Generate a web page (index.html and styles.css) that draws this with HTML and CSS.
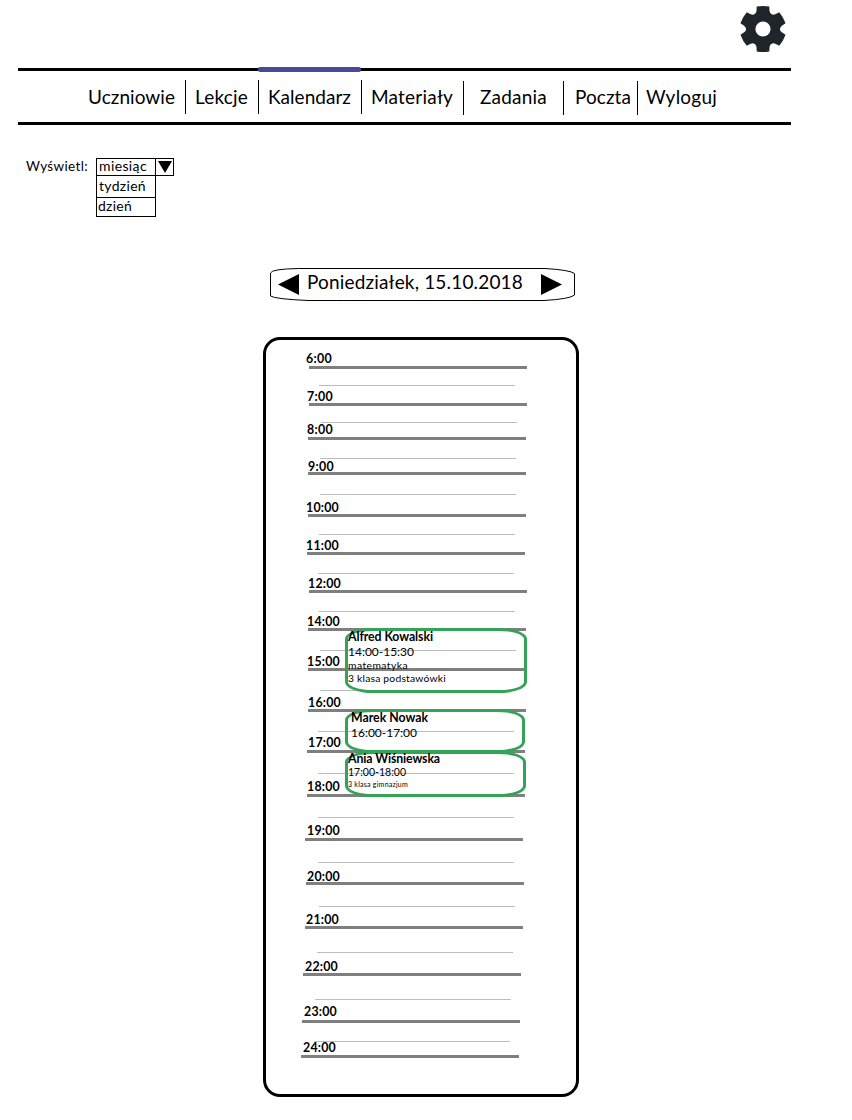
FILE: index.html
```html
<!DOCTYPE html>
<html lang="pl">
<head>
<meta charset="utf-8">
<title>Kalendarz</title>
<link rel="stylesheet" href="styles.css">
</head>
<body>
<header class="top">
  <svg class="gear" viewBox="-23 -23 46 46" width="46" height="46">
    <defs><path id="tooth" d="M-6.3-22.4Q0-23.600 6.3-22.4L6.5-18Q7-15.500 9-14L0 0L-9-14Q-7-15.500-6.5-18Z"/></defs>
    <g fill="#20252b">
      <use href="#tooth"/><use href="#tooth" transform="rotate(60)"/><use href="#tooth" transform="rotate(120)"/>
      <use href="#tooth" transform="rotate(180)"/><use href="#tooth" transform="rotate(240)"/><use href="#tooth" transform="rotate(300)"/>
      <circle r="17"/>
    </g>
    <circle r="7.6" fill="#fff"/>
  </svg>
</header>
<nav class="nav">
  <a class="tab tab-first"><span data-width="87">Uczniowie</span></a>
  <a class="tab tab-lessons"><span data-width="53">Lekcje</span></a>
  <a class="tab tab-active"><span data-width="83">Kalendarz</span></a>
  <a class="tab tab-materials"><span data-width="82">Materiały</span></a>
  <a class="tab tab-tasks"><span data-width="67">Zadania</span></a>
  <a class="tab tab-mail"><span data-width="56">Poczta</span></a>
  <a class="tab tab-logout"><span data-width="71">Wyloguj</span></a>
</nav>
<section class="view">
  <span class="view-label"><span data-width="62">Wyświetl:</span></span>
  <div class="options">
    <div class="option option-month"><span data-width="48">miesiąc</span></div>
    <div class="option option-week"><span data-width="47">tydzień</span></div>
    <div class="option option-day"><span data-width="34">dzień</span></div>
  </div>
  <div class="drop"><svg width="14" height="12" viewBox="0 0 14 12"><path d="M0 0H14L7 12Z"/></svg></div>
</section>
<section class="date">
  <svg class="date-frame" width="306" height="34" viewBox="0 0 306 34"><path d="M.5 28V5Q1.500 1 28.500 .5H275Q300 2 304.500 5.500V27Q300 31 274 32.500H38Q5 31 .5 28Z" fill="none" stroke="#000"/></svg>
  <svg width="21" height="21" viewBox="0 0 21 21"><path d="M0 10.500L21 0V21Z"/></svg>
  <span class="date-text"><span data-width="216">Poniedziałek, 15.10.2018</span></span>
  <svg width="21" height="21" viewBox="0 0 21 21"><path d="M21 10.500L0 0V21Z"/></svg>
</section>
<main class="day">
  <div class="hours" id="hours"></div>
  <article class="event event-alfred">
    <h3><span data-width="85">Alfred Kowalski</span></h3>
    <p class="time-lg"><span data-width="66">14:00-15:30</span></p>
    <p class="note"><span data-width="60">matematyka</span></p>
    <p class="note"><span data-width="98">3 klasa podstawówki</span></p>
  </article>
  <article class="event event-marek">
    <h3><span data-width="77">Marek Nowak</span></h3>
    <p class="time-lg"><span data-width="66">16:00-17:00</span></p>
  </article>
  <article class="event event-ania">
    <h3><span data-width="92">Ania Wiśniewska</span></h3>
    <p class="time-sm"><span data-width="58">17:00-18:00</span></p>
    <p class="tiny"><span data-width="60">3 klasa gimnazjum</span></p>
  </article>
</main>
<script src="calendar.js"></script>
</body>
</html>
```
FILE: styles.css
```css
* { box-sizing: border-box; }
body { margin: 0; width: 852px; height: 1120px; background: #fff; color: #000; font-family: Lato, "Open Sans", sans-serif; overflow: hidden; }
svg { display: block; flex: none; }
h3, p { margin: 0; }
[data-width] { white-space: nowrap; }
.top { height: 68px; padding: 6px 0 0 740px; }
.nav { display: flex; width: 773px; height: 57px; margin-left: 18px; border-top: 3px solid #000; border-bottom: 3px solid #000; font-size: 19px; }
.tab { display: block; height: 34px; margin-top: 10px; line-height: 31px; border-right: 1px solid #000; }
.tab-first { width: 168px; padding-left: 70px; margin-top: 9px; line-height: 33px; }
.tab-lessons { width: 73px; padding-left: 9px; margin-top: 9px; line-height: 33px; }
.tab-active { position: relative; width: 103px; padding-left: 9px; margin-top: 9px; line-height: 33px; }
.tab-active::before { content: ""; position: absolute; left: -1px; top: -13px; width: 103px; height: 5px; border-radius: 2px; background: #474b97; }
.tab-materials { width: 102px; padding-left: 9px; }
.tab-tasks { width: 100px; padding-left: 16px; }
.tab-mail { width: 74px; padding-left: 11px; }
.tab-logout { padding-left: 8px; border: 0; }
.view { display: flex; height: 59px; margin: 33px 0 0 26px; font-size: 13.500px; }
.view-label { width: 70px; line-height: 16px; }
.options { width: 60px; border: 1px solid #000; font-size: 14px; }
.option { padding-left: 2px; border-bottom: 1px solid #000; }
.option-month { height: 17px; line-height: 13px; }
.option-week { height: 22px; line-height: 19px; }
.option-day { height: 18px; line-height: 15px; border: 0; padding-left: 1px; }
.drop { width: 19px; height: 18px; margin-left: -1px; padding: 2px 0 0 2px; border: 1px solid #000; }
.date { position: relative; display: flex; width: 306px; height: 34px; margin: 51px 0 0 270px; padding: 6px 0 0 8px; }
.date-frame { position: absolute; left: 0; top: 0; }
.date-text { width: 242px; padding-left: 8px; line-height: 16px; font-size: 19px; }
.day { position: relative; width: 316px; height: 760px; margin: 35px 0 0 263px; border: 3px solid #000; border-radius: 17px; }
.hours { display: flow-root; }
.half { width: 196px; height: 1px; background: #bdbdbd; }
.hour { height: 10px; line-height: 12px; font-size: 12.400px; font-weight: 700; }
.line { width: 218px; height: 3px; background: #7f7f7f; }
.event { position: absolute; border: 3px solid #35a357; border-radius: 28px / 11px; }
.event h3 { margin-top: -1px; font-size: 12.300px; line-height: 14px; height: 14px; }
.event-alfred { left: 79px; top: 288px; width: 182px; height: 65px; }
.event-marek { left: 79px; top: 369px; width: 180px; height: 44px; padding-left: 3px; }
.event-ania { left: 79px; top: 411px; width: 181px; height: 46px; }
.event-ania h3 { margin-top: -2px; }
.time-lg { font-size: 12px; line-height: 15px; }
.note { font-size: 10.300px; line-height: 13px; }
.time-sm { font-size: 10.500px; line-height: 13px; }
.tiny { font-size: 7px; line-height: 11px; }
```
FILE: calendar.js
```js
// label, label x, baseline, line x, line y, half-hour x, half-hour y
const rows = [
  ['6:00', 306, 363, 309, 366],
  ['7:00', 307, 401, 309, 403, 319, 385],
  ['8:00', 307, 434, 308, 437, 321, 422],
  ['9:00', 308, 471, 308, 472, 320, 458],
  ['10:00', 306, 512, 308, 514, 320, 494],
  ['11:00', 306, 550, 307, 552, 319, 534],
  ['12:00', 308, 588, 309, 590, 318, 573],
  ['14:00', 307, 626, 308, 628, 319, 611],
  ['15:00', 307, 666, 308, 668, 320, 650],
  ['16:00', 308, 707, 308, 709, 320, 690],
  ['17:00', 308, 747, 307, 750, 318, 731],
  ['18:00', 307, 791, 307, 794, 318, 773],
  ['19:00', 307, 835, 305, 838, 318, 817],
  ['20:00', 307, 881, 306, 882, 318, 862],
  ['21:00', 306, 924, 305, 926, 319, 906],
  ['22:00', 305, 971, 303, 973, 317, 952],
  ['23:00', 304, 1016, 302, 1020, 315, 999],
  ['24:00', 303, 1052, 301, 1055, 314, 1041]
];
const left = 266;
let y = 340;
let html = '';
for (const [label, tx, base, lx, ly, hx, hy] of rows) {
  if (hy) {
    html += `<div class="half" style="margin-left:${hx - left}px;margin-top:${hy - y}px"></div>`;
    y = hy + 1;
  }
  html += `<div class="hour" style="margin-left:${tx - left}px;margin-top:${base - 10 - y}px"><span data-width="${label.length > 4 ? 33 : 26}">${label}</span></div>`;
  html += `<div class="line" style="margin-left:${lx - left}px;margin-top:${ly - base}px"></div>`;
  y = ly + 3;
}
document.getElementById('hours').innerHTML = html;

// Spread the letters of each label over its column width.
for (const el of document.querySelectorAll('[data-width]')) {
  const natural = el.getBoundingClientRect().width;
  el.style.letterSpacing = (el.dataset.width - natural) / el.textContent.length + 'px';
}
```
